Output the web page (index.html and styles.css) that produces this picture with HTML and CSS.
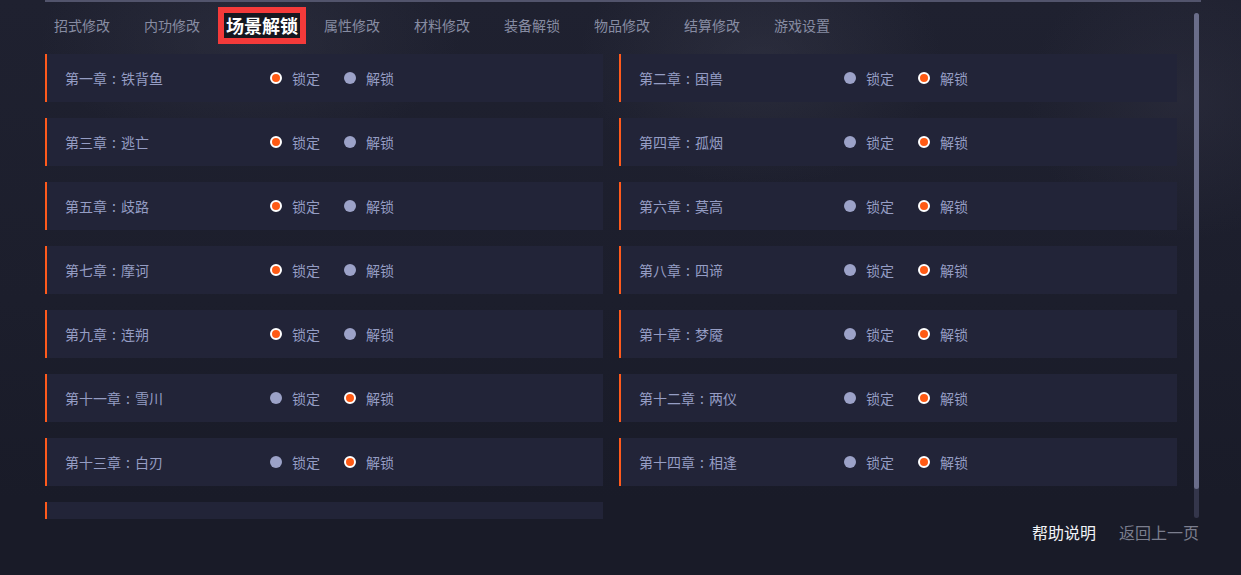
FILE: index.html
```html
<!DOCTYPE html>
<html lang="zh-CN">
<head>
<meta charset="utf-8">
<title>场景解锁</title>
<link rel="stylesheet" href="styles.css">
</head>
<body>
<div class="page">
  <div class="main">
    <div class="topline"></div>
    <div class="body-row">
      <div class="left">
        <nav class="tabs">
          <span class="tab">招式修改</span>
          <span class="tab">内功修改</span>
          <span class="tab"><span class="tab-active">场景解锁</span></span>
          <span class="tab">属性修改</span>
          <span class="tab">材料修改</span>
          <span class="tab">装备解锁</span>
          <span class="tab">物品修改</span>
          <span class="tab">结算修改</span>
          <span class="tab">游戏设置</span>
        </nav>
        <div class="list">
          <div class="card"><span class="name">第一章<span class="colon">:</span>铁背鱼</span><span class="radio on"></span><span class="lbl">锁定</span><span class="radio"></span><span class="lbl">解锁</span></div>
          <div class="card"><span class="name">第二章<span class="colon">:</span>困兽</span><span class="radio"></span><span class="lbl">锁定</span><span class="radio on"></span><span class="lbl">解锁</span></div>
          <div class="card"><span class="name">第三章<span class="colon">:</span>逃亡</span><span class="radio on"></span><span class="lbl">锁定</span><span class="radio"></span><span class="lbl">解锁</span></div>
          <div class="card"><span class="name">第四章<span class="colon">:</span>孤烟</span><span class="radio"></span><span class="lbl">锁定</span><span class="radio on"></span><span class="lbl">解锁</span></div>
          <div class="card"><span class="name">第五章<span class="colon">:</span>歧路</span><span class="radio on"></span><span class="lbl">锁定</span><span class="radio"></span><span class="lbl">解锁</span></div>
          <div class="card"><span class="name">第六章<span class="colon">:</span>莫高</span><span class="radio"></span><span class="lbl">锁定</span><span class="radio on"></span><span class="lbl">解锁</span></div>
          <div class="card"><span class="name">第七章<span class="colon">:</span>摩诃</span><span class="radio on"></span><span class="lbl">锁定</span><span class="radio"></span><span class="lbl">解锁</span></div>
          <div class="card"><span class="name">第八章<span class="colon">:</span>四谛</span><span class="radio"></span><span class="lbl">锁定</span><span class="radio on"></span><span class="lbl">解锁</span></div>
          <div class="card"><span class="name">第九章<span class="colon">:</span>连朔</span><span class="radio on"></span><span class="lbl">锁定</span><span class="radio"></span><span class="lbl">解锁</span></div>
          <div class="card"><span class="name">第十章<span class="colon">:</span>梦魇</span><span class="radio"></span><span class="lbl">锁定</span><span class="radio on"></span><span class="lbl">解锁</span></div>
          <div class="card"><span class="name">第十一章<span class="colon">:</span>雪川</span><span class="radio"></span><span class="lbl">锁定</span><span class="radio on"></span><span class="lbl">解锁</span></div>
          <div class="card"><span class="name">第十二章<span class="colon">:</span>两仪</span><span class="radio"></span><span class="lbl">锁定</span><span class="radio on"></span><span class="lbl">解锁</span></div>
          <div class="card"><span class="name">第十三章<span class="colon">:</span>白刃</span><span class="radio"></span><span class="lbl">锁定</span><span class="radio on"></span><span class="lbl">解锁</span></div>
          <div class="card"><span class="name">第十四章<span class="colon">:</span>相逢</span><span class="radio"></span><span class="lbl">锁定</span><span class="radio on"></span><span class="lbl">解锁</span></div>
          <div class="card"></div>
        </div>
      </div>
      <div class="scrollbar"><div class="thumb"></div></div>
    </div>
    <div class="footer">
      <span class="link help">帮助说明</span>
      <span class="link back">返回上一页</span>
    </div>
  </div>
</div>
</body>
</html>
```
FILE: styles.css
```css
html, body {
  margin: 0;
  padding: 0;
}
body {
  width: 1241px;
  height: 575px;
  overflow: hidden;
  font-family: "Noto Sans CJK SC", "Noto Sans", sans-serif;
  font-size: 14px;
  background:
    radial-gradient(ellipse 300px 160px at 250px 40px, rgba(60, 62, 80, 0.35), transparent 70%),
    radial-gradient(ellipse 260px 180px at 760px 60px, rgba(70, 72, 90, 0.30), transparent 70%),
    radial-gradient(ellipse 220px 200px at 1180px 100px, rgba(60, 60, 78, 0.30), transparent 70%),
    linear-gradient(180deg, #1f2130 0px, #1c1e2c 300px, #191b28 500px, #191b28 575px);
}
.page {
  padding-left: 45px;
}
.main {
  width: 1156px;
}
.topline {
  height: 2px;
  background: #52546c;
}
.body-row {
  display: flex;
}
.left {
  width: 1132px;
}
.tabs {
  display: flex;
  align-items: center;
  height: 45px;
  padding-bottom: 7px;
  margin-left: -8px;
}
.tab {
  width: 90px;
  flex: none;
  text-align: center;
  color: #878ca2;
  font-size: 14px;
  line-height: 20px;
}
.tab-active {
  display: inline-block;
  border: 6px solid #f43a3a;
  background: #16171f;
  color: #ffffff;
  font-weight: bold;
  font-size: 18px;
  line-height: 25px;
  padding: 0 2px;
  margin-top: 1px;
}
.list {
  height: 465px;
  overflow: hidden;
  display: grid;
  grid-template-columns: 558px 558px;
  column-gap: 16px;
  row-gap: 16px;
  align-content: start;
}
.card {
  height: 47px;
  padding-bottom: 1px;
  background: #222438;
  border-left: 2px solid #ff5a1c;
  padding-left: 18px;
  display: flex;
  align-items: center;
  color: #959dc4;
}
.name {
  width: 205px;
  flex: none;
}
.colon {
  display: inline-block;
  width: 14px;
  text-align: center;
}
.radio {
  width: 12px;
  height: 12px;
  border-radius: 50%;
  background: #9ca2c8;
  box-sizing: border-box;
  flex: none;
}
.radio.on {
  background: #ff5a14;
  border: 2px solid #ffffff;
}
.lbl {
  margin-left: 10px;
  margin-right: 24px;
  width: 28px;
}
.scrollbar {
  margin-left: 17px;
  margin-top: 11px;
  width: 5px;
  height: 505px;
  border-radius: 3px;
  background: #34364b;
}
.thumb {
  height: 476px;
  border-radius: 3px;
  background: #6a6d8a;
}
.footer {
  display: flex;
  justify-content: flex-end;
  gap: 23px;
  padding-right: 2px;
  padding-top: 1px;
  font-size: 16px;
  line-height: 24px;
}
.help {
  color: #f2f3f7;
}
.back {
  color: #7b7e8e;
}
```
